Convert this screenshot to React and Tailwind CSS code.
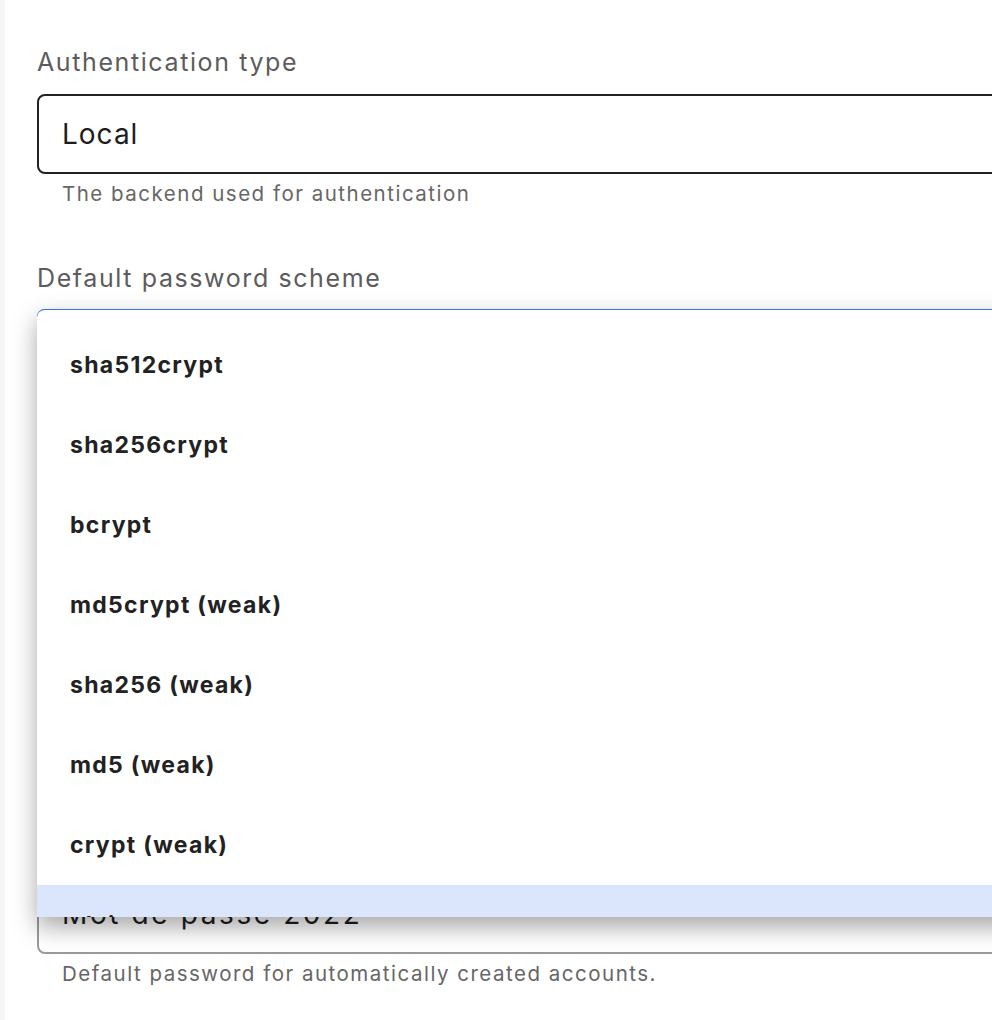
import React from "react";

const schemes = [
  "sha512crypt",
  "sha256crypt",
  "bcrypt",
  "md5crypt (weak)",
  "sha256 (weak)",
  "md5 (weak)",
  "crypt (weak)",
  "plaintext",
];

const Field = ({ label, children, help }) => (
  <div className="flex flex-col">
    {label && <label className="text-[25px] leading-[34px] tracking-[1.6px] text-[#5c5c5c]">{label}</label>}
    {children}
    {help && <p className="mt-[6px] pl-[25px] text-[20.5px] leading-[28px] tracking-[1.5px] text-[#666]">{help}</p>}
  </div>
);

export default function App() {
  return (
    <div className="relative flex h-[1020px] w-[992px] overflow-hidden bg-white" style={{ fontFamily: "Inter, 'Noto Sans', sans-serif" }}>
      <div className="w-[5px] shrink-0 bg-[#f5f6f8]" />
      <div className="flex w-[1100px] shrink-0 flex-col pl-[32px] pt-[45px]">
        <Field label="Authentication type" help="The backend used for authentication">
          <div className="mt-[15px] flex h-[80px] items-center rounded-[8px] border-2 border-[#222] px-[23px] text-[28px] tracking-[1px] text-[#1d1d1d]">
            Local
          </div>
        </Field>

        <div className="mt-[53px]">
          <Field label="Default password scheme">
            <div className="mt-[14px] flex h-[80px] items-center rounded-[8px] border-2 border-[#3b76d6] px-[23px] text-[28px] text-[#1d1d1d]">
              sha512crypt
            </div>
          </Field>
        </div>

        <div className="mt-[485px]">
          <Field help="Default password for automatically created accounts.">
            <div className="flex h-[80px] items-center rounded-[8px] border-2 border-[#9a9a9a] px-[23px] text-[28px] tracking-[2.6px] text-[#1d1d1d]">
              Mot de passe 2022
            </div>
          </Field>
        </div>
      </div>

      <div className="absolute left-[37px] top-[309px] h-[608px] w-[1000px] overflow-hidden rounded-tl-[8px] border-t border-[#3b76d6] bg-white pt-[15px] shadow-[0_10px_24px_rgba(0,0,0,0.35)]">
        <ul>
          {schemes.map((s, i) => (
            <li
              key={s}
              className={
                "flex h-[80px] items-center px-[33px] text-[23px] font-bold tracking-[1.3px] text-[#222] " +
                (i === schemes.length - 1 ? "bg-[#dbe6fd]" : "")
              }
            >
              {s}
            </li>
          ))}
        </ul>
      </div>
    </div>
  );
}
